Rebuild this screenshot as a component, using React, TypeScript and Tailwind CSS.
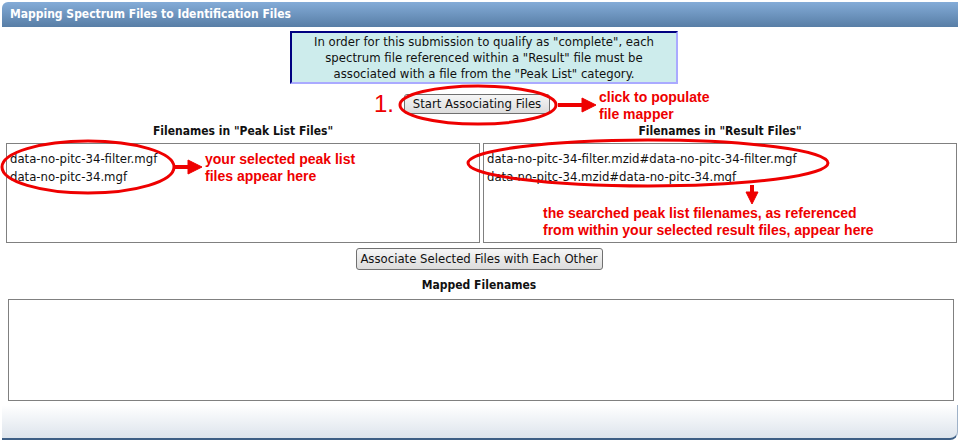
import React from "react";

const ui = { fontFamily: '"DejaVu Sans Condensed", "DejaVu Sans", sans-serif' };
const note = { fontFamily: '"Liberation Sans", Arial, sans-serif' };

function Annotations() {
  return (
    <svg className="absolute left-0 top-0 pointer-events-none" width="964" height="441">
      <g fill="none" stroke="#ee0000" strokeWidth="3">
        <ellipse cx="478" cy="105" rx="78" ry="19" />
        <ellipse cx="88" cy="167" rx="86" ry="26" />
        <ellipse cx="648" cy="163" rx="180" ry="23" />
      </g>
      <g fill="#ee0000" stroke="#ee0000">
        <line x1="558" y1="105" x2="585" y2="105" strokeWidth="4" />
        <polygon points="582,98 596,105 582,112" />
        <line x1="175" y1="167" x2="190" y2="167" strokeWidth="4" />
        <polygon points="188,160 202,167 188,174" />
        <line x1="752" y1="185" x2="752" y2="194" strokeWidth="4" />
        <polygon points="746,192 752,204 758,192" />
      </g>
    </svg>
  );
}

export default function App() {
  return (
    <div className="relative w-[964px] h-[441px] bg-white overflow-hidden" style={ui}>
      <div className="ml-[2px] pt-[2px] w-[956px]">
        <div className="h-[25px] rounded-tl-[6px] bg-gradient-to-b from-[#84acd8] to-[#587ea6] pl-[8px] text-[12px] font-bold leading-[25px] text-white">
          Mapping Spectrum Files to Identification Files
        </div>

        <div className="ml-[288px] mt-[4px] w-[388px] h-[53px] border-t-2 border-l-2 border-t-[#000080] border-l-[#000080] border-r-2 border-b-2 border-r-[#aaaaff] border-b-[#aaaaff] bg-[#cdecec] pt-[1px] text-center text-[13px] leading-[16px] text-[#111]">
          In order for this submission to qualify as "complete", each
          <br />
          spectrum file referenced within a "Result" file must be
          <br />
          associated with a file from the "Peak List" category.
        </div>

        <div className="mt-[10px] flex">
          <button className="ml-[402px] h-[20px] w-[146px] rounded-[3px] border border-[#707070] bg-gradient-to-b from-[#f6f6f6] to-[#dcdcdc] text-[13px] leading-[18px] text-[#111]">
            Start Associating Files
          </button>
        </div>

        <div className="mt-[9px] flex gap-[3px] pl-[4px]">
          <div className="w-[474px]">
            <div className="text-center text-[12px] font-bold leading-[17px] text-[#111]">Filenames in "Peak List Files"</div>
            <div className="mt-[3px] h-[100px] border border-[#808080] px-[3px] pt-[6px] text-[13px] leading-[18px] text-[#111]">
              <div>data-no-pitc-34-filter.mgf</div>
              <div>data-no-pitc-34.mgf</div>
            </div>
          </div>
          <div className="w-[474px]">
            <div className="text-center text-[12px] font-bold leading-[17px] text-[#111]">Filenames in "Result Files"</div>
            <div className="mt-[3px] h-[100px] border border-[#808080] px-[3px] pt-[6px] text-[13px] leading-[18px] text-[#111]">
              <div>data-no-pitc-34-filter.mzid#data-no-pitc-34-filter.mgf</div>
              <div>data-no-pitc-34.mzid#data-no-pitc-34.mgf</div>
            </div>
          </div>
        </div>

        <div className="mt-[5px] flex justify-center pr-[2px]">
          <button className="h-[22px] w-[247px] rounded-[3px] border border-[#707070] bg-gradient-to-b from-[#f6f6f6] to-[#dcdcdc] text-[13px] leading-[20px] text-[#111]">
            Associate Selected Files with Each Other
          </button>
        </div>
        <div className="mt-[7px] pr-[2px] text-center text-[12px] font-bold leading-[17px] text-[#111]">Mapped Filenames</div>
        <div className="ml-[6px] mt-[5px] h-[102px] w-[946px] border border-[#808080]" />

        <div className="mt-[4px] h-[35px] rounded-br-[8px] border-r border-b-2 border-r-[#9fb2c8] border-b-[#3e5f85] bg-gradient-to-b from-white to-[#dde4ec]" />
      </div>

      <Annotations />

      <div className="absolute left-[374px] top-[91px] text-[24px] leading-[26px] text-[#ee0000]" style={note}>1.</div>
      <div className="absolute left-[599px] top-[89px] text-[14px] font-bold leading-[17px] text-[#ee0000]" style={note}>
        click to populate
        <br />
        file mapper
      </div>
      <div className="absolute left-[205px] top-[151px] text-[14px] font-bold leading-[17px] text-[#ee0000]" style={note}>
        your selected peak list
        <br />
        files appear here
      </div>
      <div className="absolute left-[543px] top-[205px] text-[14px] font-bold leading-[17px] text-[#ee0000]" style={note}>
        the searched peak list filenames, as referenced
        <br />
        from within your selected result files, appear here
      </div>
    </div>
  );
}
